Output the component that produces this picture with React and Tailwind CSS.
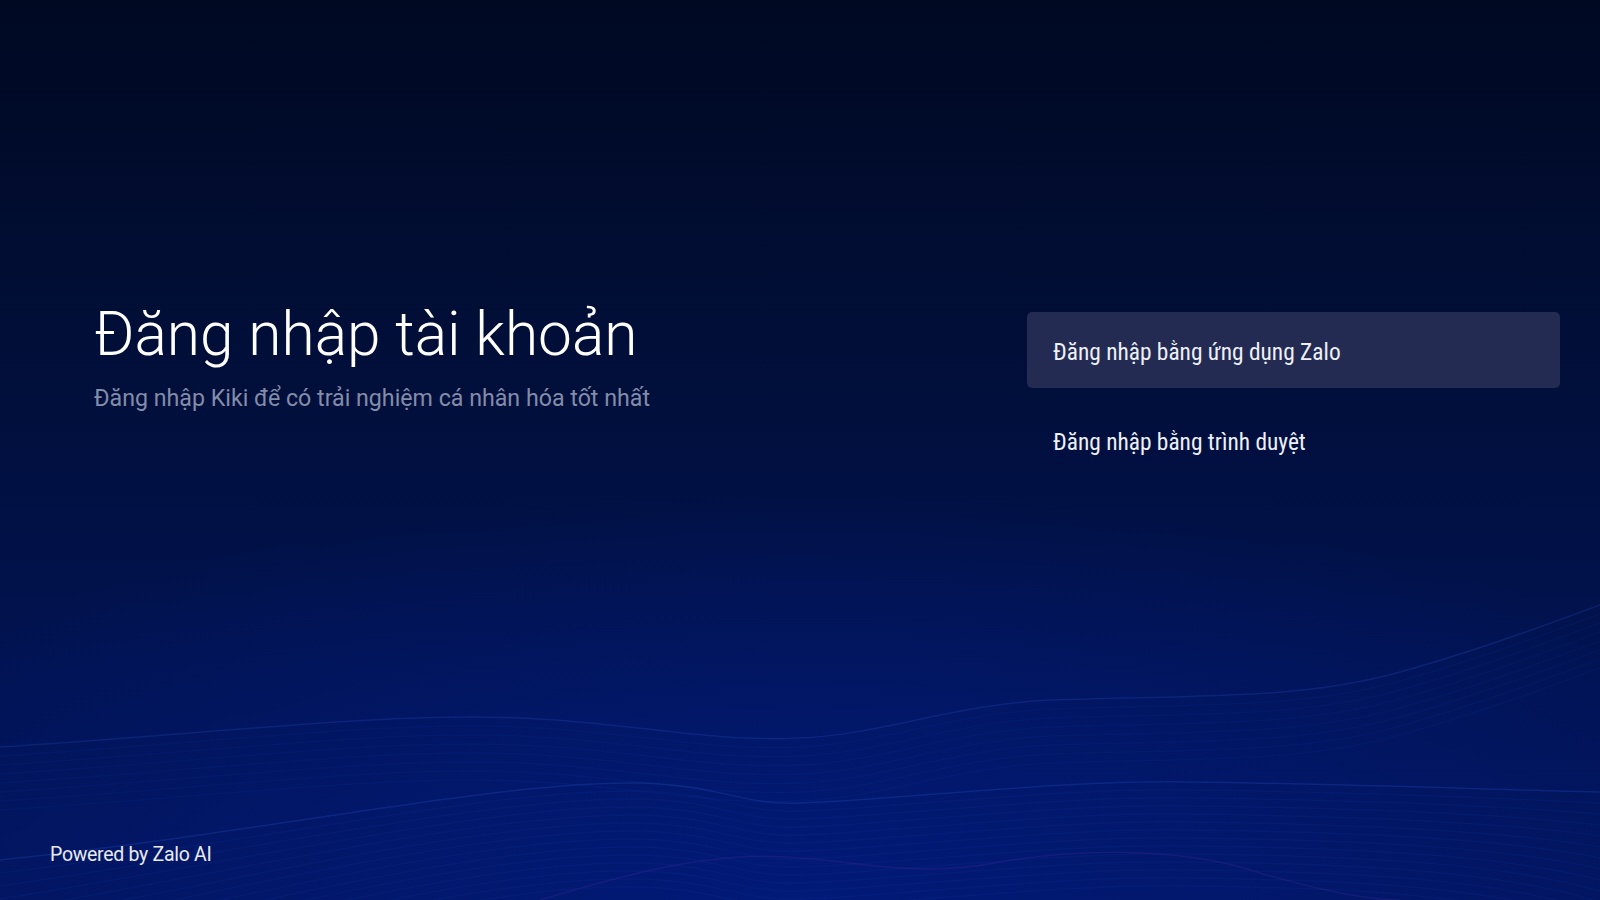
import React from "react";

// Background wave bundle — a handful of faint lines that follow the same curve
function Waves() {
  const upper = [];
  for (let i = 0; i < 8; i++) {
    const o = i * 9;
    upper.push(
      `M0 ${747 + o} C 200 ${735 + o}, 380 ${712 + o}, 520 ${718 + o} C 640 ${723 + o}, 700 ${742 + o}, 800 ${738 + o} C 880 ${735 + o}, 950 ${705 + o}, 1050 ${700 + o} C 1200 ${695 + o}, 1300 ${700 + o}, 1400 ${672 + o} C 1480 ${650 + o}, 1560 ${620 + o}, 1600 ${605 + o}`
    );
  }
  const lower = [];
  for (let i = 0; i < 14; i++) {
    const o = i * 8;
    const s = i * 5;
    lower.push(
      `M0 ${860 + o + s} C 250 ${835 + o}, 500 ${780 + o}, 640 ${783 + o} C 720 ${785 + o}, 740 ${805 + o}, 800 ${803 + o} C 900 ${800 + o}, 1050 ${780 + o}, 1190 ${782 + o} C 1350 ${784 + o}, 1500 ${790 + o}, 1600 ${792 + o + s * 0.6}`
    );
  }
  return (
    <svg
      className="absolute inset-0 w-full h-full pointer-events-none"
      viewBox="0 0 1600 900"
      preserveAspectRatio="none"
    >
      {upper.map((d, i) => (
        <path
          key={"u" + i}
          d={d}
          fill="none"
          stroke="#2a4fc0"
          strokeOpacity={i === 0 ? 0.25 : 0.07}
          strokeWidth="1.5"
        />
      ))}
      {lower.map((d, i) => (
        <path
          key={"l" + i}
          d={d}
          fill="none"
          stroke="#2a4fc0"
          strokeOpacity={i === 0 ? 0.28 : 0.09}
          strokeWidth="1.5"
        />
      ))}
      <path
        d="M540 900 C 640 870, 720 850, 800 858 C 860 862, 920 878, 1000 862 C 1080 848, 1180 848, 1250 870 C 1300 885, 1360 900, 1400 900"
        fill="none"
        stroke="#4a2aa0"
        strokeOpacity="0.25"
        strokeWidth="1.5"
      />
    </svg>
  );
}

export default function App() {
  const options = [
    { label: "Đăng nhập bằng ứng dụng Zalo", active: true },
    { label: "Đăng nhập bằng trình duyệt", active: false },
  ];

  return (
    <div className="relative w-full h-[900px] overflow-hidden flex flex-col bg-[radial-gradient(ellipse_70%_45%_at_50%_100%,#021a78_0%,rgba(2,22,110,0)_100%),linear-gradient(to_bottom,#000922_0%,#010f3c_45%,#011352_75%,#02145a_100%)] font-[Roboto,'Noto_Sans',sans-serif]">
      <Waves />

      {/* ---- CONTENT ---- */}
      <div className="relative flex-1 flex justify-between">
        <div className="pl-[94px] pt-[305px]">
          <h1 className="text-[60.4px] leading-[60px] font-light text-white">
            Đăng nhập tài khoản
          </h1>
          <p className="mt-[19px] text-[23.2px] leading-[28px] text-[#838ca9]">
            Đăng nhập Kiki để có trải nghiệm cá nhân hóa tốt nhất
          </p>
        </div>

        <div className="w-[533px] mr-[40px] pt-[312px] flex flex-col gap-[14px]">
          {options.map((o) => (
            <div
              key={o.label}
              className={
                "h-[76px] rounded-[5px] pl-[26px] pt-[6px] flex items-center text-[23.4px] text-[#eef0f6] font-['Roboto_Condensed','Liberation_Sans_Narrow',Roboto,sans-serif] [font-stretch:condensed] " +
                (o.active ? "bg-[#232b52]" : "")
              }
            >
              {o.label}
            </div>
          ))}
        </div>
      </div>

      {/* ---- FOOTER ---- */}
      <div className="relative pl-[50px] pb-[33px] text-[19.5px] leading-[24px] text-[#e8ebf3] tracking-[-0.3px]">
        Powered by Zalo AI
      </div>
    </div>
  );
}
